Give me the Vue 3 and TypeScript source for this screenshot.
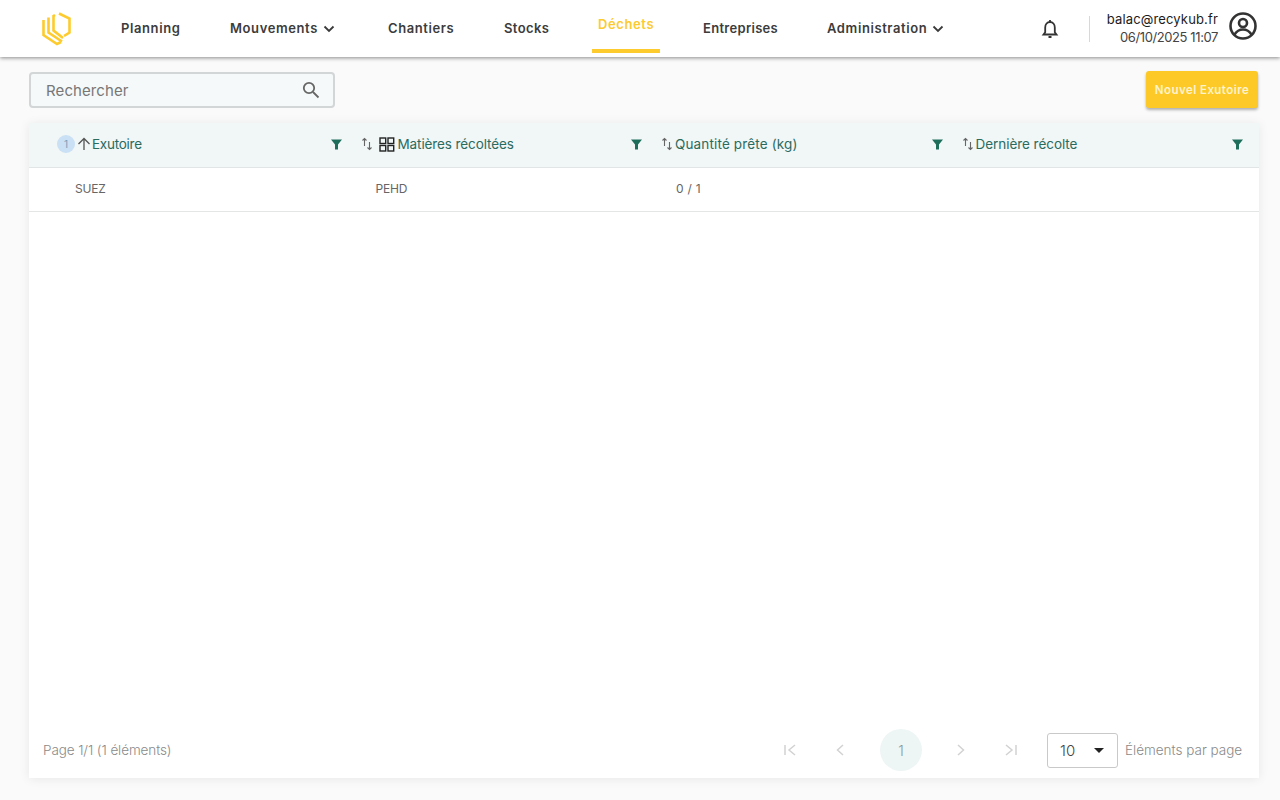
<script setup lang="ts">
interface NavItem { label: string; active?: boolean; chevron?: boolean; cls: string }
const nav: NavItem[] = [
  { label: 'Planning', cls: 'n1' },
  { label: 'Mouvements', chevron: true, cls: 'n2' },
  { label: 'Chantiers', cls: 'n3' },
  { label: 'Stocks', cls: 'n4' },
  { label: 'Déchets', active: true, cls: 'n5' },
  { label: 'Entreprises', cls: 'n6' },
  { label: 'Administration', chevron: true, cls: 'n7' },
]
const cols = [
  { label: 'Matières récoltées', cls: 'l-mat' },
  { label: 'Quantité prête (kg)', cls: 'l-qty' },
  { label: 'Dernière récolte', cls: 'l-der' },
]
</script>

<template>
  <div class="page">
    <header class="top">
      <svg class="logo" width="32" height="36" viewBox="42 11 32 36" fill="none" stroke="#fdcb2e" stroke-width="2.600">
        <path d="M60 13.500 L70.500 18.500 V32.500 L65 36" />
        <path d="M56 15 L54.500 16 V30.500 L64 38" />
        <path d="M49.500 17.500 V32.500 L63 41.500" />
        <path d="M44.500 20 V35 L58 44 L62 42" />
      </svg>
      <nav class="nav">
        <a v-for="n in nav" :key="n.label" class="nav-item" :class="[n.cls, { active: n.active }]">
          <span>{{ n.label }}</span>
          <svg v-if="n.chevron" class="chev" width="12" height="8" viewBox="0 0 12 8" fill="none" stroke="#3a3a3a" stroke-width="1.800"><path d="M1.500 1.500 L6 6 L10.500 1.500" /></svg>
        </a>
      </nav>
      <div class="right">
        <svg class="bell" width="18" height="20" viewBox="0 0 18 20" fill="none" stroke="#333" stroke-width="1.800">
          <path d="M2.500 15.500 H15.500 L13.800 13.300 V8.500 C13.800 5.300 11.800 3 9 3 C6.200 3 4.200 5.300 4.200 8.500 V13.300 Z" />
          <path d="M9 1 V3" />
          <path d="M7.500 18 H10.500" stroke-width="2" />
        </svg>
        <div class="divider"></div>
        <div class="user">
          <div class="mail">balac@recykub.fr</div>
          <div class="date">06/10/2025 11:07</div>
        </div>
        <svg class="avatar" width="28" height="28" viewBox="0 0 28 28" fill="none" stroke="#333" stroke-width="2.600">
          <circle cx="14" cy="14" r="12.500" />
          <circle cx="14" cy="11" r="4" />
          <path d="M5.500 22.500 C8 18.500 11 17.500 14 17.500 C17 17.500 20 18.500 22.500 22.500" />
        </svg>
      </div>
    </header>

    <main class="main">
      <div class="toolbar">
        <div class="search">
          <span class="ph">Rechercher</span>
          <svg width="18" height="18" viewBox="0 0 18 18" fill="none" stroke="#666" stroke-width="1.800"><circle cx="7" cy="7" r="5.200" /><path d="M11 11 L16.500 16.500" /></svg>
        </div>
        <button class="add">Nouvel Exutoire</button>
      </div>

      <section class="card">
        <div class="grid head">
          <div class="th">
            <span class="badge">1</span>
            <svg class="up" width="14" height="14" viewBox="0 0 14 14" fill="none" stroke="#555" stroke-width="1.300"><path d="M7 13 V1.500 M1.500 7 L7 1.500 L12.500 7" /></svg>
            <span class="label first">Exutoire</span>
            <svg class="filter" width="11" height="11" viewBox="0 0 11 11" fill="#1e6e5c"><path d="M0 .5 H11 L7 5.500 V10.500 H4 V5.500 Z" /></svg>
          </div>
          <div v-for="(c, i) in cols" :key="c.label" class="th">
            <svg class="sort" width="12" height="14" viewBox="0 0 12 14" fill="none" stroke="#666" stroke-width="1.100"><path d="M3.500 9 V1.500 M1.500 3.500 L3.500 1.500 L5.500 3.500" /><path d="M8.500 5 V12.500 M6.500 10.500 L8.500 12.500 L10.500 10.500" /></svg>
            <svg v-if="i === 0" class="cat" width="16" height="15" viewBox="0 0 16 15" fill="none" stroke="#222" stroke-width="1.400"><rect x="1" y="1" width="5.700" height="5.500" /><rect x="9" y="1" width="5.700" height="5.500" /><rect x="1" y="8.500" width="5.700" height="5.500" /><rect x="9" y="8.500" width="5.700" height="5.500" /></svg>
            <span class="label" :class="c.cls">{{ c.label }}</span>
            <svg class="filter" width="11" height="11" viewBox="0 0 11 11" fill="#1e6e5c"><path d="M0 .5 H11 L7 5.500 V10.500 H4 V5.500 Z" /></svg>
          </div>
        </div>
        <div class="grid row">
          <div class="td">SUEZ</div>
          <div class="td">PEHD</div>
          <div class="td qty">0 / 1</div>
          <div class="td"></div>
        </div>
        <div class="spacer"></div>
        <footer class="foot">
          <span class="count">Page 1/1 (1 éléments)</span>
          <div class="pager">
            <svg class="pg p-first" width="14" height="14" viewBox="0 0 14 14" fill="none" stroke="#d2d2d2" stroke-width="1.500"><path d="M2 2 V12 M12 2 L6 7 L12 12" /></svg>
            <svg class="pg p-prev" width="14" height="14" viewBox="0 0 14 14" fill="none" stroke="#d2d2d2" stroke-width="1.500"><path d="M10 2 L4.500 7 L10 12" /></svg>
            <span class="current">1</span>
            <svg class="pg p-next" width="14" height="14" viewBox="0 0 14 14" fill="none" stroke="#d2d2d2" stroke-width="1.500"><path d="M4 2 L9.500 7 L4 12" /></svg>
            <svg class="pg p-last" width="14" height="14" viewBox="0 0 14 14" fill="none" stroke="#d2d2d2" stroke-width="1.500"><path d="M2 2 L8 7 L2 12 M12 2 V12" /></svg>
          </div>
          <div class="size">
            <span>10</span>
            <span class="caret"></span>
          </div>
          <span class="per">Éléments par page</span>
        </footer>
      </section>
    </main>
  </div>
</template>

<style>
html, body { margin: 0; background: #fafafa; }
</style>

<style scoped>
* { box-sizing: border-box; }
.page {
  width: 1280px;
  height: 800px;
  overflow: hidden;
  display: flex;
  flex-direction: column;
  background: #fafafa;
  font-family: Inter, "Noto Sans", sans-serif;
}
.top {
  height: 57px;
  flex: none;
  background: #fff;
  display: flex;
  align-items: center;
  box-shadow: 0 1px 4px rgba(0, 0, 0, .45);
  position: relative;
  z-index: 2;
  padding-left: 41px;
}
.logo { flex: none; }
.nav {
  display: flex;
  align-items: flex-start;
  height: 57px;
  margin-left: 22px;
}
.nav-item {
  display: flex;
  align-items: center;
  gap: 5px;
  height: 56px;
  padding: 0 0 0 25px;
  color: #3c3c3c;
  font-size: 13px;
  font-weight: 600;
  letter-spacing: .6px;
  white-space: nowrap;
}
.n1 { width: 110px; padding-left: 26px; }
.n2 { width: 158px; }
.n3 { width: 116px; }
.n4 { width: 94px; letter-spacing: .4px; }
.n5 { width: 68px; padding-left: 6px; margin-left: 19px; }
.n6 { width: 124px; margin-left: 18px; letter-spacing: .3px; }
.n7 { width: 170px; }
.nav-item.active {
  color: #fdcb2e;
  height: 53px;
  padding-bottom: 1px;
  border-bottom: 4px solid #fdcb2e;
}
.chev { margin-top: 1px; }
.right {
  margin-left: auto;
  display: flex;
  align-items: center;
  padding-right: 23px;
}
.bell { margin-right: 30px; }
.divider { width: 1px; height: 26px; background: #d8d8d8; margin-right: 18px; }
.user { text-align: right; width: 110px; margin: 0 11px 2px 0; line-height: 18px; }
.avatar { margin-bottom: 5px; }
.mail { color: #1c1c1c; font-size: 13px; letter-spacing: .15px; white-space: nowrap; display: flex; justify-content: flex-end; }
.date { color: #444; font-size: 13px; letter-spacing: -.4px; white-space: nowrap; }
.main {
  flex: 1;
  padding: 15px 21px 22px 29px;
  display: flex;
  flex-direction: column;
  min-height: 0;
}
.toolbar {
  display: flex;
  justify-content: space-between;
  align-items: flex-start;
  height: 51px;
  flex: none;
}
.search {
  width: 306px;
  height: 36px;
  border: 2px solid #d2d6d6;
  border-radius: 4px;
  background: #f6f9f9;
  display: flex;
  align-items: center;
  justify-content: space-between;
  padding: 0 13px 0 15px;
}
.ph { color: #777; font-size: 15px; letter-spacing: .1px; }
.add {
  width: 112px;
  height: 37px;
  margin: -1px 1px 0 0;
  border: 0;
  border-radius: 3px;
  background: #fdc926;
  color: #fdf3cf;
  font-family: inherit;
  font-size: 11.500px;
  font-weight: 600;
  letter-spacing: .45px;
  box-shadow: 0 2px 3px rgba(0, 0, 0, .3);
  padding: 0;
}
.card {
  flex: 1;
  min-height: 0;
  background: #fff;
  display: flex;
  flex-direction: column;
  box-shadow: 0 1px 10px rgba(0, 0, 0, .08);
}
.grid {
  display: grid;
  grid-template-columns: repeat(4, 300.500px);
  padding-left: 21px;
}
.head {
  height: 45px;
  background: #f1f6f6;
  border-bottom: 1px solid #e2e5e5;
  flex: none;
}
.th {
  display: flex;
  align-items: center;
  padding: 0 9px 2px 10px;
  min-width: 0;
}
.th:first-child { padding-left: 7px; }
.badge {
  width: 18px;
  height: 18px;
  border-radius: 50%;
  background: #c9e0f5;
  color: #7d9db8;
  font-size: 10px;
  display: flex;
  align-items: center;
  justify-content: center;
  flex: none;
}
.up { margin-left: 2px; flex: none; }
.label {
  color: #2b6b5e;
  font-size: 13.500px;
  margin-left: 2px;
  white-space: nowrap;
}
.label.first { margin-left: 1px; letter-spacing: -.25px; }
.l-mat { letter-spacing: -.1px; margin-left: 3px; }
.l-qty { letter-spacing: .15px; }
.l-der { letter-spacing: -.05px; }
.sort { flex: none; }
.cat { margin-left: 6px; flex: none; }
.filter { margin-left: auto; flex: none; }
.row {
  height: 44px;
  flex: none;
  border-bottom: 1px solid #e4e6e6;
}
.td {
  padding: 0 0 2px 25px;
  display: flex;
  align-items: center;
  color: #666;
  font-size: 12px;
  letter-spacing: -.2px;
}
.td.qty { letter-spacing: .3px; }
.spacer { flex: 1; }
.foot {
  height: 60px;
  flex: none;
  display: flex;
  align-items: center;
  padding: 4px 14px 0;
  color: #8a8a8a;
  font-size: 13.500px;
  font-weight: 300;
}
.count { width: 737px; letter-spacing: -.1px; }
.pager {
  display: flex;
  align-items: center;
  width: 274px;
  margin-left: -7px;
}
.pg { flex: none; }
.p-first { margin-left: 10px; margin-right: 36px; }
.p-prev { margin-right: 33px; }
.current {
  width: 42px;
  height: 42px;
  border-radius: 50%;
  background: #eef5f5;
  display: flex;
  align-items: center;
  justify-content: center;
  color: #8a9999;
  font-size: 14px;
  flex: none;
  margin-right: 32px;
}
.p-next { margin-right: 36px; }
.size {
  width: 71px;
  height: 35px;
  border: 1px solid #c9c9c9;
  border-radius: 3px;
  display: flex;
  align-items: center;
  justify-content: space-between;
  padding: 0 13px 0 12px;
  color: #444;
  font-size: 15px;
  flex: none;
}
.caret {
  border-left: 5px solid transparent;
  border-right: 5px solid transparent;
  border-top: 5px solid #222;
}
.per { margin-left: 7px; white-space: nowrap; }
</style>
